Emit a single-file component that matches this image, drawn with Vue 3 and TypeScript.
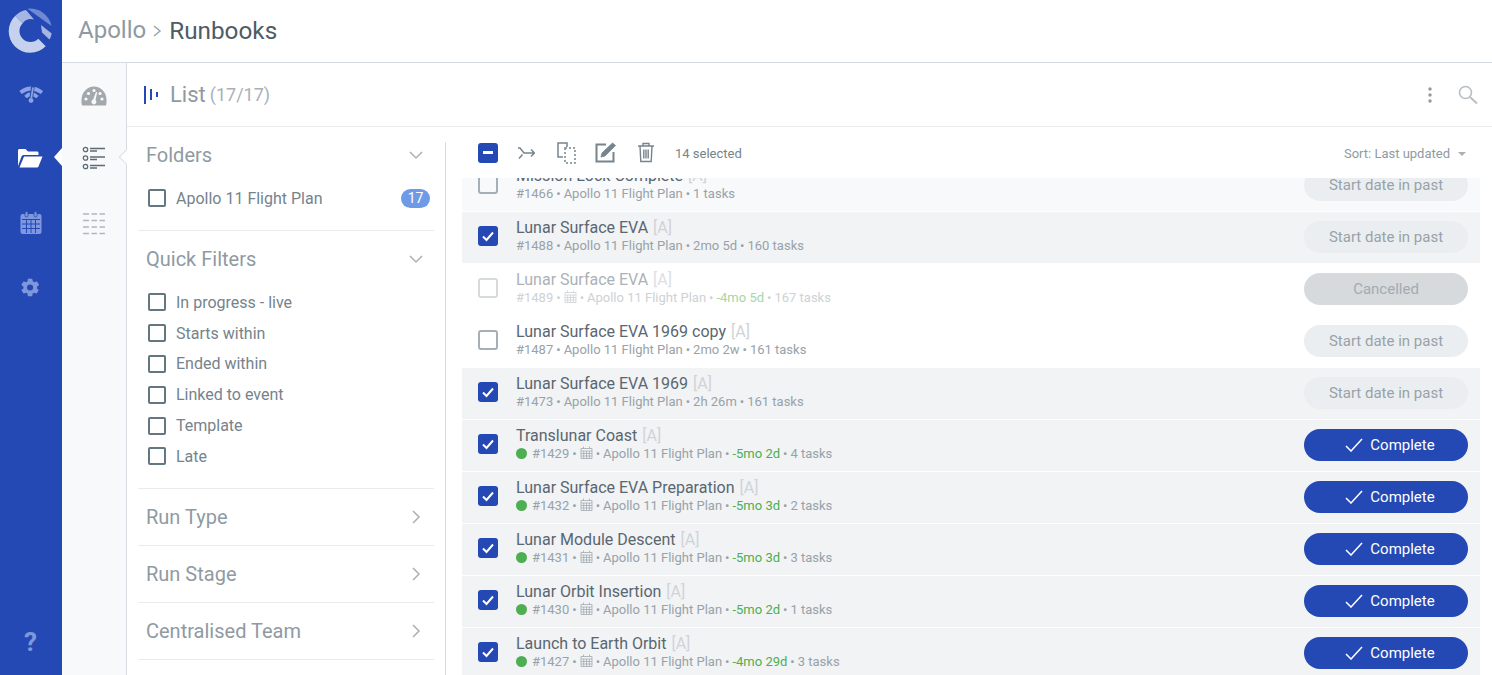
<script setup lang="ts">
type Status = 'past' | 'cancelled' | 'complete'
interface Row {
  title: string
  id: number
  age: string
  tasks: number
  checked: boolean
  status: Status
  live?: boolean
  overdue?: boolean
  faded?: boolean
  soft?: boolean
}

const quickFilters = ['In progress - live', 'Starts within', 'Ended within', 'Linked to event', 'Template', 'Late']
const collapsed = ['Run Type', 'Run Stage', 'Centralised Team']

const rows: Row[] = [
  { title: 'Mission Lock Complete', id: 1466, age: '', tasks: 1, checked: false, status: 'past', soft: true },
  { title: 'Lunar Surface EVA', id: 1488, age: '2mo 5d', tasks: 160, checked: true, status: 'past' },
  { title: 'Lunar Surface EVA', id: 1489, age: '-4mo 5d', tasks: 167, checked: false, status: 'cancelled', overdue: true, faded: true },
  { title: 'Lunar Surface EVA 1969 copy', id: 1487, age: '2mo 2w', tasks: 161, checked: false, status: 'past' },
  { title: 'Lunar Surface EVA 1969', id: 1473, age: '2h 26m', tasks: 161, checked: true, status: 'past' },
  { title: 'Translunar Coast', id: 1429, age: '-5mo 2d', tasks: 4, checked: true, status: 'complete', live: true, overdue: true },
  { title: 'Lunar Surface EVA Preparation', id: 1432, age: '-5mo 3d', tasks: 2, checked: true, status: 'complete', live: true, overdue: true },
  { title: 'Lunar Module Descent', id: 1431, age: '-5mo 3d', tasks: 3, checked: true, status: 'complete', live: true, overdue: true },
  { title: 'Lunar Orbit Insertion', id: 1430, age: '-5mo 2d', tasks: 1, checked: true, status: 'complete', live: true, overdue: true },
  { title: 'Launch to Earth Orbit', id: 1427, age: '-4mo 29d', tasks: 3, checked: true, status: 'complete', live: true, overdue: true },
]

const statusLabel: Record<Status, string> = {
  past: 'Start date in past',
  cancelled: 'Cancelled',
  complete: 'Complete',
}
</script>

<template>
  <div class="app">
    <nav class="rail">
      <svg class="logo" width="62" height="62" viewBox="0 0 62 62">
        <path d="M45.7 46.2A21.500 21.500 0 1 1 15.300 15.800L22.700 23.200A11 11 0 1 0 38.300 38.800Z" fill="#c6d1ee" />
        <path d="M15.300 15.800A21.500 21.500 0 0 1 26 10L34 19.500A11 11 0 0 0 22.700 23.200Z" fill="#a5b6e3" />
        <path d="M27.500 8.800A21.500 21.500 0 0 1 51.500 26Z" fill="#6f89d5" />
        <path d="M41 25L51.700 33.500A21.500 21.500 0 0 1 49.500 39.500L42 32.500Z" fill="#a5b6e3" />
      </svg>
      <svg class="rail-icon r1" width="24" height="20" viewBox="0 0 24 20" fill="none" stroke="#8ba1e0">
        <path d="M1.500 7.500Q12 -0.500 23 7.500" stroke-width="3.800" />
        <path d="M6.500 12Q12 6.500 18.500 12" stroke-width="3.600" />
        <path d="M14 1L11.500 18" stroke="#2449b5" stroke-width="3.600" />
        <path d="M14 2.500L12.300 13" stroke-width="1.800" />
        <circle cx="12" cy="15.500" r="2.400" fill="#8ba1e0" stroke="none" />
      </svg>
      <svg class="rail-icon r2" width="26" height="22" viewBox="0 0 26 22" fill="#fff">
        <path d="M1 19V3.500C1 2.700 1.700 2 2.500 2H8.500L11 4.500H20C21 4.500 21.500 5.200 21.500 6V8H7C5.800 8 5 8.500 4.500 9.500L1 19Z" />
        <path d="M7 9.500H25.500L21.500 19.500C21.200 20.200 20.500 20.500 20 20.500H2.500Z" />
      </svg>
      <svg class="rail-icon r3" width="24" height="24" viewBox="0 0 24 24">
        <rect x="1.500" y="3" width="21" height="20" rx="2" fill="#7f97dc" />
        <rect x="6" y="0.500" width="3" height="5.500" rx="1.500" fill="#7f97dc" stroke="#2449b5" stroke-width="0.800" />
        <rect x="15" y="0.500" width="3" height="5.500" rx="1.500" fill="#7f97dc" stroke="#2449b5" stroke-width="0.800" />
        <path d="M3 8.500H21M3 13H21M3 17.500H21M7.500 8V22M12 8V22M16.500 8V22" stroke="#2449b5" stroke-width="1" />
      </svg>
      <svg class="rail-icon r4" width="21" height="21" viewBox="0 0 24 24" fill="#7f97dc">
        <path d="M19.400 13c.1-.3.100-.7.100-1s0-.7-.1-1l2.100-1.600c.2-.2.300-.4.100-.7l-2-3.400c-.1-.2-.4-.3-.6-.2l-2.500 1c-.5-.4-1.100-.7-1.700-1L14 2.400c0-.2-.3-.4-.5-.4h-4c-.2 0-.5.200-.5.400l-.4 2.700c-.6.200-1.200.6-1.700 1l-2.500-1c-.2-.1-.5 0-.6.200l-2 3.400c-.1.300 0 .5.100.7L4 11c0 .3-.1.700-.1 1s0 .7.100 1l-2.100 1.600c-.2.200-.3.400-.1.700l2 3.400c.1.200.4.300.6.200l2.500-1c.5.400 1.100.7 1.700 1l.4 2.700c0 .2.300.4.500.4h4c.2 0 .5-.2.500-.4l.4-2.700c.6-.2 1.200-.6 1.700-1l2.500 1c.2.100.5 0 .6-.2l2-3.400c.1-.3 0-.5-.1-.7L19.400 13zM11.500 15.500a3.500 3.500 0 1 1 0-7 3.500 3.500 0 0 1 0 7z" />
      </svg>
      <span class="help">?</span>
    </nav>

    <div class="main">
      <header class="topbar">
        <span class="crumb">Apollo</span>
        <svg width="10" height="14" viewBox="0 0 10 14" class="crumb-sep"><path d="M2 2L8 7L2 12" fill="none" stroke="#9aa5ad" stroke-width="1.500" /></svg>
        <span class="crumb current">Runbooks</span>
      </header>

      <div class="workspace">
        <aside class="subnav">
          <svg class="sub-icon s1" width="26" height="20" viewBox="0 0 26 20">
            <path d="M1 19.500C0.400 17.500 0.500 16 0.500 14A12.500 13.500 0 0 1 25.500 14C25.500 16 25.600 17.500 25 19.500Z" fill="#a3a8ac" />
            <g fill="#f8f9fb"><circle cx="5" cy="13" r="1.600" /><circle cx="7.500" cy="7.500" r="1.600" /><circle cx="13" cy="4.500" r="1.600" /><circle cx="21" cy="13" r="1.600" /><circle cx="19" cy="7.500" r="1.600" /><path d="M15 6L16.200 6.300L14.500 14A2.500 2.500 0 1 1 12.200 13.500Z" /></g>
          </svg>
          <svg class="sub-icon s2" width="24" height="24" viewBox="0 0 24 24" fill="none" stroke="#5d6b75">
            <circle cx="3.500" cy="3.500" r="2.200" stroke-width="1.300" /><circle cx="3.500" cy="12" r="2.200" stroke-width="1.300" /><circle cx="3.500" cy="20.500" r="2.200" stroke-width="1.300" />
            <path d="M8 2.500H23M8 5H15M8 11H23M8 13.500H15M8 19.500H23M8 22H15" stroke-width="1.300" />
          </svg>
          <svg class="sub-icon s3" width="24" height="24" viewBox="0 0 24 24" stroke="#b1b7bb" stroke-width="1.300">
            <path d="M1 2H7M9.500 2H15M17.500 2H23M1 8.500H7M9.500 8.500H15M17.500 8.500H23M1 15H7M9.500 15H15M17.500 15H23M1 21.500H7M9.500 21.500H15M17.500 21.500H23" />
          </svg>
        </aside>

        <div class="content">
          <div class="list-head">
            <svg width="16" height="18" viewBox="0 0 16 18" class="bars"><path d="M1 0V18M7 3V14M13 6V11" stroke="#2449b5" stroke-width="2" /></svg>
            <span class="list-title">List</span>
            <span class="list-count">(17/17)</span>
            <div class="list-tools">
              <svg width="4" height="16" viewBox="0 0 4 16" fill="#8f9aa2"><circle cx="2" cy="2" r="1.700" /><circle cx="2" cy="8" r="1.700" /><circle cx="2" cy="14" r="1.700" /></svg>
              <svg width="20" height="20" viewBox="0 0 20 20" fill="none" stroke="#b8bfc4" stroke-width="1.600"><circle cx="7.500" cy="7.500" r="6" /><path d="M12 12L19 18.500" stroke-width="2" /></svg>
            </div>
          </div>

          <div class="body">
            <section class="filters">
              <div class="group folders">
                <div class="group-head">
                  <h3>Folders</h3>
                  <svg class="chev" width="14" height="10" viewBox="0 0 14 10"><path d="M1 2L7 8L13 2" fill="none" stroke="#a9b1b7" stroke-width="1.500" /></svg>
                </div>
                <label class="check-line">
                  <span class="box"></span><span class="check-label">Apollo 11 Flight Plan</span><span class="badge">17</span>
                </label>
              </div>
              <div class="group quick">
                <div class="group-head">
                  <h3>Quick Filters</h3>
                  <svg class="chev" width="14" height="10" viewBox="0 0 14 10"><path d="M1 2L7 8L13 2" fill="none" stroke="#a9b1b7" stroke-width="1.500" /></svg>
                </div>
                <div class="quick-list">
                  <label v-for="f in quickFilters" :key="f" class="check-line">
                    <span class="box"></span><span class="check-label">{{ f }}</span>
                  </label>
                </div>
              </div>
              <div v-for="c in collapsed" :key="c" class="group closed">
                <h3>{{ c }}</h3>
                <svg class="chev-right" width="10" height="14" viewBox="0 0 10 14"><path d="M2 1L8 7L2 13" fill="none" stroke="#a9b1b7" stroke-width="1.500" /></svg>
              </div>
            </section>

            <section class="runs">
              <div class="toolbar">
                <span class="tick-box"><span class="minus"></span></span>
                <svg class="tool t1" width="18" height="14" viewBox="0 0 18 14" fill="none" stroke="#76848d" stroke-width="1.500"><path d="M1 2L3 2L7 7L17 7M14 3.500L17.500 7L14 10.500M5.500 8.500L2 12.500" /></svg>
                <svg class="tool t2" width="19" height="22" viewBox="0 0 19 22" fill="none" stroke="#76848d" stroke-width="1.500"><path d="M6 15H1V1H10V5" /><path d="M8 6H18V21H8Z" stroke-dasharray="2 2" /></svg>
                <svg class="tool t3" width="22" height="21" viewBox="0 0 22 21" fill="none" stroke="#76848d" stroke-width="2"><path d="M11 2.500H1.500V19.500H18.500V10" /><path d="M6 15L7 11L17.500 1L20.500 3.500L10 14Z" fill="#76848d" stroke-width="0.800" /></svg>
                <svg class="tool t4" width="18" height="21" viewBox="0 0 18 21" fill="none" stroke="#76848d" stroke-width="1.400"><path d="M1 4H17M6 4V1.500H12V4M3 4L3.800 19.500H14.200L15 4M6.800 7.500V16.500M9 7.500V16.500M11.200 7.500V16.500" /></svg>
                <span class="count">14 selected</span>
                <span class="sort">Sort: Last updated<span class="caret"></span></span>
              </div>
              <div class="scroller">
                <div class="run-list">
                  <article
                    v-for="r in rows"
                    :key="r.id"
                    class="run"
                    :class="{ picked: r.checked, soft: r.soft, faded: r.faded }"
                  >
                    <span class="row-box" :class="{ on: r.checked }">
                      <svg v-if="r.checked" width="14" height="12" viewBox="0 0 14 12"><path d="M2 6.500L5.500 10L12 2.500" fill="none" stroke="#fff" stroke-width="2" /></svg>
                    </span>
                    <div class="run-text">
                      <div class="run-title">{{ r.title }} <span class="tag">[A]</span></div>
                      <div class="meta">
                        <span v-if="r.live" class="dot"></span>
                        <span>#{{ r.id }}</span>
                        <template v-if="r.overdue">
                          <span class="sep">•</span>
                          <svg class="cal" width="13" height="14" viewBox="0 0 13 14" fill="none" stroke="#a3abb1" stroke-width="0.800"><path d="M1 2.500H12V12.500H1ZM1 5H12M1 7.500H12M1 10H12M3.700 5V12.500M6.500 5V12.500M9.300 5V12.500M3.500 0.500V3M9.500 0.500V3" /></svg>
                        </template>
                        <span class="sep">•</span>
                        <span>Apollo 11 Flight Plan</span>
                        <template v-if="r.age">
                          <span class="sep">•</span>
                          <span :class="{ late: r.overdue }">{{ r.age }}</span>
                        </template>
                        <span class="sep">•</span>
                        <span>{{ r.tasks }} tasks</span>
                      </div>
                    </div>
                    <button class="status" :class="r.status">
                      <svg v-if="r.status === 'complete'" width="18" height="14" viewBox="0 0 18 14"><path d="M1 8L6 13L17 1" fill="none" stroke="#fff" stroke-width="1.500" /></svg>
                      {{ statusLabel[r.status] }}
                    </button>
                  </article>
                </div>
              </div>
            </section>
          </div>
        </div>
      </div>
    </div>
  </div>
</template>

<style scoped>
.app {
  display: flex;
  width: 100%;
  height: 100vh;
  overflow: hidden;
  background: #fff;
  font-family: Roboto, "Liberation Sans", sans-serif;
  color: #5d6b75;
}
.rail {
  position: relative;
  flex: 0 0 62px;
  display: flex;
  flex-direction: column;
  align-items: center;
  background: #2449b5;
}
.logo { flex: none; }
.rail-icon { flex: none; }
.r1 { margin-top: 23px; }
.r2 { margin-top: 42px; margin-right: 2px; }
.r3 { margin-top: 42px; margin-right: 1px; }
.r4 { margin-top: 42px; margin-right: 1px; }
.rail::after {
  content: "";
  position: absolute;
  right: 0;
  top: 148px;
  border-style: solid;
  border-width: 9px 8px 9px 0;
  border-color: transparent #fff transparent transparent;
}
.help {
  margin-top: auto;
  margin-bottom: 16px;
  padding-right: 1px;
  font: 700 26px/34px Roboto, sans-serif;
  color: #7f97dc;
}
.main {
  flex: 1;
  min-width: 0;
  display: flex;
  flex-direction: column;
}
.topbar {
  flex: 0 0 63px;
  box-sizing: border-box;
  display: flex;
  align-items: center;
  padding: 0 0 2px 16px;
  border-bottom: 1px solid #d5dbe0;
}
.crumb { font-size: 24px; color: #8f9aa2; }
.crumb.current { color: #4f5b65; font-size: 24.3px; }
.crumb-sep { margin: 2px 7px 0 6px; }
.workspace {
  flex: 1;
  min-height: 0;
  display: flex;
}
.subnav {
  position: relative;
  flex: 0 0 65px;
  box-sizing: border-box;
  display: flex;
  flex-direction: column;
  align-items: center;
  background: #f8f9fb;
  border-right: 1px solid #d5dbe0;
}
.subnav::after {
  content: "";
  position: absolute;
  right: -1px;
  top: 88px;
  width: 12px;
  height: 12px;
  box-sizing: border-box;
  background: #fff;
  border-left: 1px solid #d5dbe0;
  border-bottom: 1px solid #d5dbe0;
  transform: translateX(6px) rotate(45deg);
  clip-path: polygon(0 0, 100% 100%, 0 100%);
}
.sub-icon { flex: none; }
.s1 { margin-top: 23px; }
.s2 { margin-top: 40px; }
.s3 { margin-top: 42px; }
.content {
  flex: 1;
  min-width: 0;
  display: flex;
  flex-direction: column;
}
.list-head {
  flex: 0 0 64px;
  box-sizing: border-box;
  display: flex;
  align-items: center;
  padding: 0 14px 0 17px;
  border-bottom: 1px solid #e8ebee;
}
.bars { margin-right: 10px; }
.list-title { font-size: 22px; color: #8f9aa2; }
.list-count { margin-left: 4px; font-size: 18px; color: #a9b1b7; }
.list-tools {
  margin-left: auto;
  display: flex;
  align-items: center;
  gap: 26px;
}
.body {
  flex: 1;
  min-height: 0;
  display: flex;
}
.filters {
  flex: 0 0 319px;
  box-sizing: border-box;
  margin-top: 15px;
  padding: 0 11px;
  border-right: 1px solid #d5dbe0;
}
.group { border-bottom: 1px solid #e8ebee; }
.group-head {
  display: flex;
  align-items: center;
  justify-content: space-between;
  height: 26px;
  padding-left: 8px;
  padding-right: 11px;
}
h3 { margin: 0; font-size: 20px; font-weight: 400; color: #8f9aa2; }
.folders { height: 89px; box-sizing: border-box; }
.folders .check-line { margin-top: 19px; padding-right: 4px; }
.quick { height: 258px; box-sizing: border-box; padding-top: 15px; }
.quick-list { margin-top: 15px; }
.quick .check-line { height: 30.8px; }
.check-line {
  display: flex;
  align-items: center;
  height: 22px;
  padding-left: 10px;
  font-size: 16px;
  color: #75838c;
}
.box {
  flex: none;
  width: 18px;
  height: 18px;
  box-sizing: border-box;
  border: 2px solid #647680;
  border-radius: 2px;
}
.check-label { margin-left: 10px; }
.badge {
  margin-left: auto;
  width: 29px;
  height: 19px;
  border-radius: 10px;
  background: #6f9ae6;
  color: #fff;
  font-size: 14px;
  line-height: 19px;
  text-align: center;
}
.closed {
  display: flex;
  align-items: center;
  justify-content: space-between;
  height: 57px;
  box-sizing: border-box;
  padding: 0 13px 0 8px;
}
.runs {
  flex: 1;
  min-width: 0;
  display: flex;
  flex-direction: column;
  padding: 0 12px 0 16px;
}
.toolbar {
  flex: 0 0 51px;
  display: flex;
  align-items: center;
  padding: 0 14px 0 16px;
}
.tick-box {
  display: flex;
  align-items: center;
  justify-content: center;
  width: 20px;
  height: 20px;
  border-radius: 3px;
  background: #2449b5;
}
.minus { width: 10px; height: 2.500px; background: #fff; }
.t1 { margin-left: 19px; }
.t2 { margin-left: 22px; }
.t3 { margin-left: 19px; }
.t4 { margin-left: 20px; }
.count { margin: 2px 0 0 20px; font-size: 13px; color: #75838c; }
.sort {
  display: flex;
  align-items: center;
  margin: 2px 0 0 auto;
  font-size: 13px;
  color: #8f9aa2;
}
.caret {
  margin-left: 8px;
  border-style: solid;
  border-width: 4px 4px 0;
  border-color: #a9b1b7 transparent transparent;
}
.scroller {
  flex: 1;
  min-height: 0;
  overflow: hidden;
}
.run-list { margin-top: -18px; }
.run {
  display: flex;
  align-items: center;
  height: 51px;
  margin-bottom: 1px;
  padding: 0 12px 0 16px;
}
.run.picked { background: #f1f3f5; }
.run.soft { background: #f8f9fa; }
.row-box {
  flex: none;
  display: flex;
  align-items: center;
  justify-content: center;
  width: 20px;
  height: 20px;
  margin-bottom: 3px;
  box-sizing: border-box;
  border: 2px solid #a5afb6;
  border-radius: 3px;
}
.row-box.on { border: none; background: #2449b5; }
.run-text { margin-left: 18px; min-width: 0; padding-bottom: 2px; }
.run-title { font-size: 16px; line-height: 18px; color: #5a6670; }
.tag { color: #d0d4d8; margin-left: 1px; }
.meta {
  display: flex;
  align-items: center;
  margin-top: 1px;
  font-size: 13px;
  line-height: 16px;
  color: #98a2a9;
}
.sep { margin: 0 3px; }
.dot {
  width: 11px;
  height: 11px;
  margin: -2px 5px 0 0;
  border-radius: 50%;
  background: #4caf50;
}
.cal { margin-top: -2px; }
.late { color: #4caf50; }
.status {
  flex: none;
  display: flex;
  align-items: center;
  justify-content: center;
  gap: 7px;
  width: 164px;
  height: 32px;
  margin: 0 0 1px auto;
  padding: 0;
  border: none;
  border-radius: 16px;
  font: 15px Roboto, sans-serif;
  background: #ebeef0;
  color: #98a2a9;
}
.status.complete { background: #2449b5; color: #fff; padding-left: 8px; }
.status.cancelled { background: #d6dadd; color: #a3abb1; }
.run.faded .row-box { border-color: #d5dadd; }
.run.faded .run-title { color: #abb2b7; }
.run.faded .tag { color: #dde0e3; }
.run.faded .meta { color: #cdd2d5; }
.run.faded .cal { stroke: #cdd2d5; }
.run.faded .late { color: #a5d6a7; }
</style>
